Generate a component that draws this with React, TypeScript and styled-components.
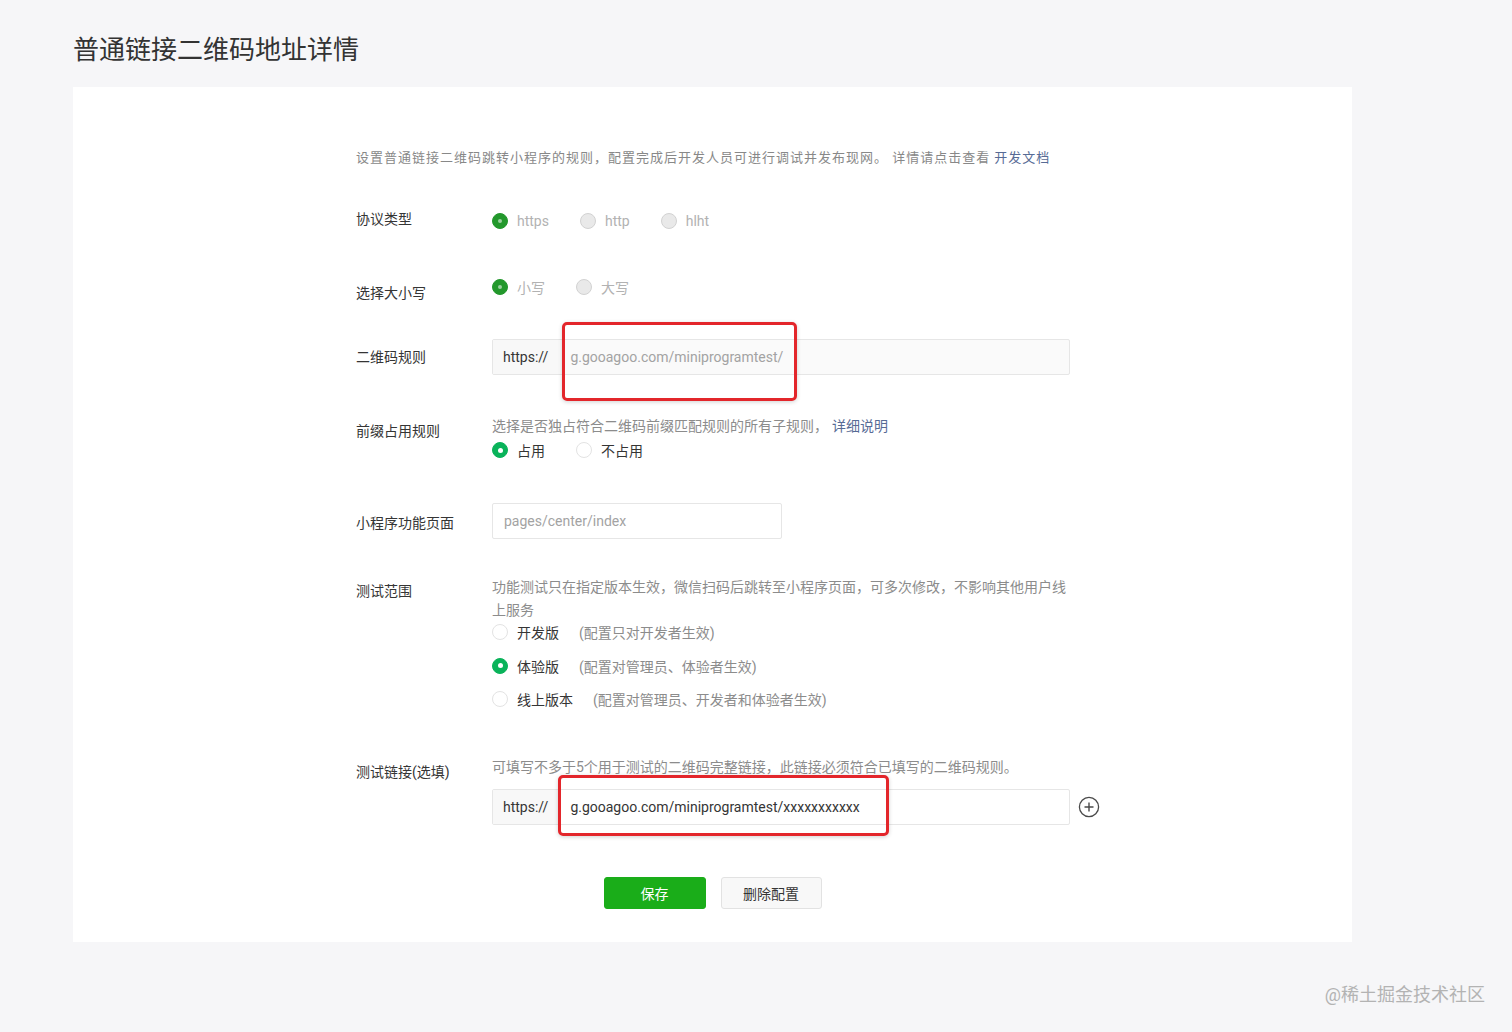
import React from "react";
import styled, { createGlobalStyle } from "styled-components";

const Global = createGlobalStyle`
  html, body { margin: 0; padding: 0; }
  body {
    background: #f6f6f8;
    font-family: Roboto, "Noto Sans CJK SC", sans-serif;
    color: #353535;
    -webkit-font-smoothing: antialiased;
  }
`;

const Page = styled.div`
  position: relative;
  min-height: 1032px;
  padding: 32px 0 0 73px;
  box-sizing: border-box;
`;

const Title = styled.h1`
  margin: 0 0 19px 0;
  font-size: 26px;
  line-height: 36px;
  font-weight: 400;
  color: #333;
`;

const Card = styled.div`
  width: 1279px;
  background: #fff;
  padding: 61px 0 33px;
  box-sizing: border-box;
`;

const Form = styled.div`
  margin-left: 283px;
  display: flex;
  flex-direction: column;
`;

const Intro = styled.p`
  margin: 0;
  font-size: 13px;
  line-height: 20px;
  color: #888;
  letter-spacing: 1px;
`;

const Link = styled.a<{ $ml?: number }>`
  color: #576b95;
  text-decoration: none;
  margin-left: ${(p) => p.$ml ?? 4}px;
`;

const Row = styled.div<{ $mt: number }>`
  display: flex;
  align-items: flex-start;
  margin-top: ${(p) => p.$mt}px;
`;

const Label = styled.div<{ $pt?: number; $lh?: number }>`
  width: 136px;
  flex: none;
  font-size: 14px;
  line-height: ${(p) => p.$lh ?? 20}px;
  padding-top: ${(p) => p.$pt ?? 0}px;
  color: #353535;
`;

const Content = styled.div`
  width: 578px;
  display: flex;
  flex-direction: column;
`;

const Desc = styled.div<{ $lh?: number }>`
  font-size: 14px;
  line-height: ${(p) => p.$lh ?? 20}px;
  color: #8c8c8c;
`;

const RadioGroup = styled.div<{ $mt?: number }>`
  display: flex;
  align-items: center;
  margin-top: ${(p) => p.$mt ?? 0}px;
`;

const RadioList = styled.div<{ $mt?: number }>`
  display: flex;
  flex-direction: column;
  gap: 13.5px;
  margin-top: ${(p) => p.$mt ?? 0}px;
`;

const Option = styled.label`
  display: inline-flex;
  align-items: center;
  height: 20px;
  margin-right: 31px;
`;

const Circle = styled.span<{ $checked?: boolean; $disabled?: boolean }>`
  position: relative;
  width: 16px;
  height: 16px;
  border-radius: 50%;
  box-sizing: border-box;
  flex: none;
  margin-right: 9px;
  background: ${(p) =>
    p.$checked ? (p.$disabled ? "#23982c" : "#0ab35a") : p.$disabled ? "#e9e9e9" : "#fff"};
  border: 1px solid
    ${(p) => (p.$checked ? (p.$disabled ? "#23982c" : "#0ab35a") : p.$disabled ? "#d2d2d2" : "#e3e3e3")};
  &::after {
    content: "";
    display: ${(p) => (p.$checked ? "block" : "none")};
    position: absolute;
    left: 50%;
    top: 50%;
    width: ${(p) => (p.$disabled ? 4 : 5)}px;
    height: ${(p) => (p.$disabled ? 4 : 5)}px;
    margin: ${(p) => (p.$disabled ? -2 : -2.5)}px 0 0 ${(p) => (p.$disabled ? -2 : -2.5)}px;
    border-radius: 50%;
    background: ${(p) => (p.$disabled ? "rgba(255,255,255,0.55)" : "#fff")};
  }
`;

const OptText = styled.span<{ $disabled?: boolean }>`
  font-size: 14px;
  color: ${(p) => (p.$disabled ? "#b2b2b2" : "#353535")};
`;

const Hint = styled.span`
  font-size: 14px;
  color: #8c8c8c;
  margin-left: 20px;
`;

const InputLine = styled.div<{ $mt?: number }>`
  display: flex;
  align-items: center;
  margin-top: ${(p) => p.$mt ?? 0}px;
`;

const InputBox = styled.div<{ $w: number; $disabled?: boolean }>`
  position: relative;
  flex: none;
  width: ${(p) => p.$w}px;
  height: 36px;
  box-sizing: border-box;
  border: 1px solid #e6e6e6;
  border-radius: 2px;
  background: ${(p) => (p.$disabled ? "#fafafa" : "#fff")};
  display: flex;
  align-items: center;
  font-size: 14px;
`;

const Prefix = styled.span`
  height: 100%;
  display: flex;
  align-items: center;
  padding: 0 11px 0 10px;
  background: #f8f8f8;
  color: #353535;
`;

const Value = styled.span<{ $muted?: boolean }>`
  padding-left: 11px;
  color: ${(p) => (p.$muted ? "#a3a3a3" : "#353535")};
`;

const Mark = styled.div<{ $l: number; $t: number; $w: number; $h: number }>`
  position: absolute;
  left: ${(p) => p.$l}px;
  top: ${(p) => p.$t}px;
  width: ${(p) => p.$w}px;
  height: ${(p) => p.$h}px;
  box-sizing: border-box;
  border: 3px solid #e3262b;
  border-radius: 5px;
  box-shadow: 0 1px 4px rgba(0, 0, 0, 0.18);
  pointer-events: none;
`;

const AddBtn = styled.button`
  flex: none;
  margin-left: 8px;
  width: 22px;
  height: 22px;
  padding: 0;
  border: none;
  background: none;
  display: flex;
  align-items: center;
  justify-content: center;
  cursor: pointer;
`;

const Buttons = styled.div`
  display: flex;
  justify-content: center;
  gap: 15px;
  margin-top: 52px;
`;

const Btn = styled.button<{ $primary?: boolean }>`
  width: ${(p) => (p.$primary ? 102 : 101)}px;
  height: 32px;
  box-sizing: border-box;
  border-radius: 3px;
  font-family: inherit;
  font-size: 14px;
  cursor: pointer;
  background: ${(p) => (p.$primary ? "#1aad19" : "#f8f8f8")};
  color: ${(p) => (p.$primary ? "#fff" : "#353535")};
  border: 1px solid ${(p) => (p.$primary ? "#1aad19" : "#e2e2e2")};
`;

const Watermark = styled.div`
  position: absolute;
  right: 27px;
  bottom: 26px;
  font-size: 18px;
  color: #b3b3b3;
`;

type Opt = { text: string; checked?: boolean; hint?: string };

const Radio = ({ o, disabled }: { o: Opt; disabled?: boolean }) => (
  <Option>
    <Circle $checked={o.checked} $disabled={disabled} />
    <OptText $disabled={disabled}>{o.text}</OptText>
    {o.hint && <Hint>{o.hint}</Hint>}
  </Option>
);

export default function App() {
  return (
    <>
      <Global />
      <Page>
        <Title>普通链接二维码地址详情</Title>
        <Card>
          <Form>
            <Intro>
              设置普通链接二维码跳转小程序的规则，配置完成后开发人员可进行调试并发布现网。 详情请点击查看
              <Link href="#">开发文档</Link>
            </Intro>

            <Row $mt={41}>
              <Label>协议类型</Label>
              <RadioGroup $mt={2}>
                <Radio disabled o={{ text: "https", checked: true }} />
                <Radio disabled o={{ text: "http" }} />
                <Radio disabled o={{ text: "hlht" }} />
              </RadioGroup>
            </Row>

            <Row $mt={46}>
              <Label $pt={6}>选择大小写</Label>
              <RadioGroup>
                <Radio disabled o={{ text: "小写", checked: true }} />
                <Radio disabled o={{ text: "大写" }} />
              </RadioGroup>
            </Row>

            <Row $mt={36}>
              <Label $lh={36}>二维码规则</Label>
              <InputBox $w={578} $disabled>
                <Prefix>https://</Prefix>
                <Value $muted>g.gooagoo.com/miniprogramtest/</Value>
                <Mark $l={69} $t={-18} $w={235} $h={79} />
              </InputBox>
            </Row>

            <Row $mt={41}>
              <Label $pt={5}>前缀占用规则</Label>
              <Content>
                <Desc>
                  选择是否独占符合二维码前缀匹配规则的所有子规则，
                  <Link href="#" $ml={4}>详细说明</Link>
                </Desc>
                <RadioGroup $mt={4}>
                  <Radio o={{ text: "占用", checked: true }} />
                  <Radio o={{ text: "不占用" }} />
                </RadioGroup>
              </Content>
            </Row>

            <Row $mt={43}>
              <Label $lh={36} $pt={2}>小程序功能页面</Label>
              <InputBox $w={290}>
                <Value $muted>pages/center/index</Value>
              </InputBox>
            </Row>

            <Row $mt={35}>
              <Label $pt={5}>测试范围</Label>
              <Content>
                <Desc $lh={23}>
                  功能测试只在指定版本生效，微信扫码后跳转至小程序页面，可多次修改，不影响其他用户线上服务
                </Desc>
                <RadioList>
                  <Radio o={{ text: "开发版", hint: "(配置只对开发者生效)" }} />
                  <Radio o={{ text: "体验版", checked: true, hint: "(配置对管理员、体验者生效)" }} />
                  <Radio o={{ text: "线上版本", hint: "(配置对管理员、开发者和体验者生效)" }} />
                </RadioList>
              </Content>
            </Row>

            <Row $mt={48}>
              <Label $pt={5}>测试链接(选填)</Label>
              <Content>
                <Desc>可填写不多于5个用于测试的二维码完整链接，此链接必须符合已填写的二维码规则。</Desc>
                <InputLine $mt={12}>
                  <InputBox $w={578}>
                    <Prefix>https://</Prefix>
                    <Value>g.gooagoo.com/miniprogramtest/xxxxxxxxxxx</Value>
                    <Mark $l={65} $t={-15} $w={331} $h={61} />
                  </InputBox>
                  <AddBtn aria-label="add">
                    <svg width="22" height="22" viewBox="0 0 22 22">
                      <circle cx="11" cy="11" r="9.6" fill="none" stroke="#4a4a4a" strokeWidth="1.3" />
                      <path d="M11 6.5v9M6.5 11h9" stroke="#4a4a4a" strokeWidth="1.4" />
                    </svg>
                  </AddBtn>
                </InputLine>
              </Content>
            </Row>
          </Form>

          <Buttons>
            <Btn $primary>保存</Btn>
            <Btn>删除配置</Btn>
          </Buttons>
        </Card>
        <Watermark>@稀土掘金技术社区</Watermark>
      </Page>
    </>
  );
}
